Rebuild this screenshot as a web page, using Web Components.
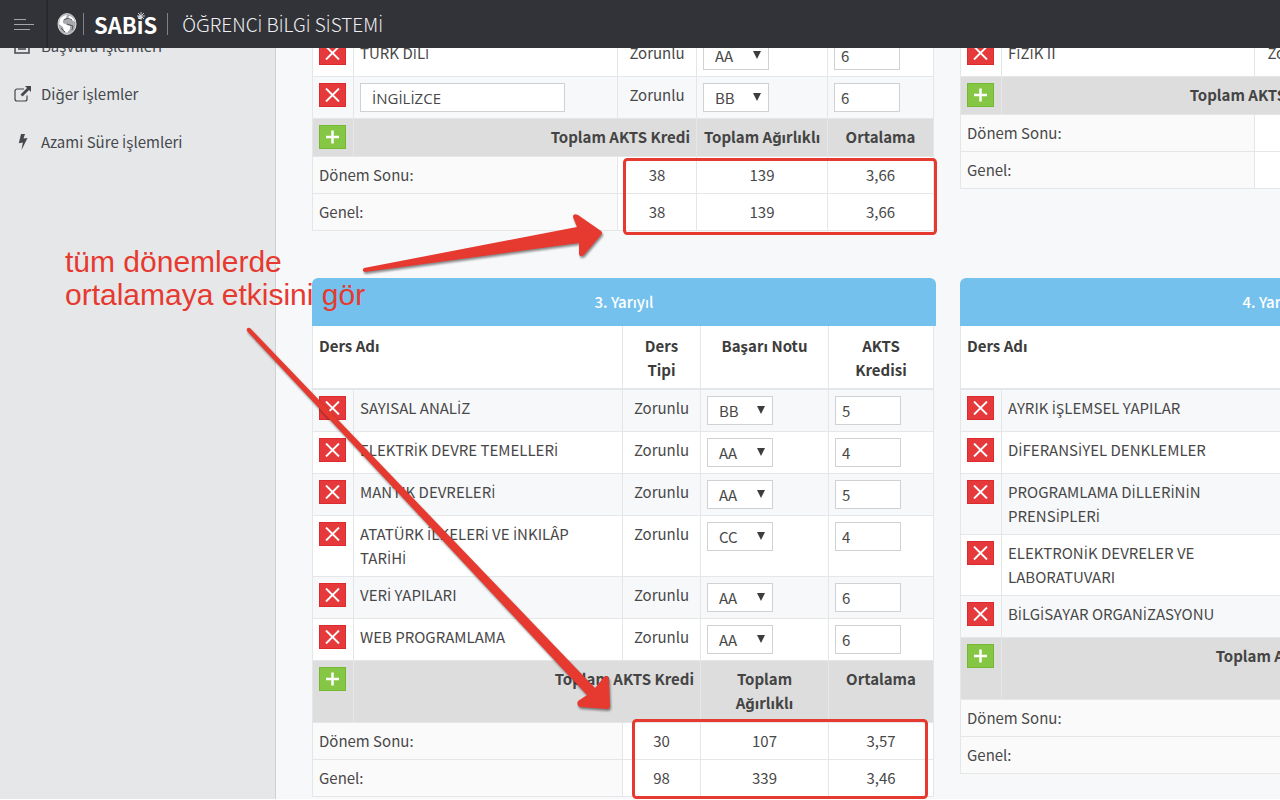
<!DOCTYPE html>
<html lang="tr">
<head>
<meta charset="utf-8">
<meta name="viewport" content="width=device-width, initial-scale=1">
<title>SABİS | Öğrenci Bilgi Sistemi</title>
<style>
  html, body { height: 100%; }
  body {
    margin: 0;
    overflow: hidden;
    background: #f7f8fa;
    color: #484848;
    font: 15px/24px "Noto Sans CJK SC", "Noto Sans", sans-serif;
  }
</style>
</head>
<body>
<app-shell>
  <app-header slot="header">ÖĞRENCİ BİLGİ SİSTEMİ</app-header>
  <side-nav slot="nav">
    <nav-item icon="form">Başvuru İşlemleri</nav-item>
    <nav-item icon="external">Diğer İşlemler</nav-item>
    <nav-item icon="bolt">Azami Süre İşlemleri</nav-item>
  </side-nav>
  <term-panel term="1"></term-panel>
  <term-panel term="2"></term-panel>
  <term-panel term="3"></term-panel>
  <term-panel term="4"></term-panel>
  <note-layer slot="notes">tüm dönemlerde<br>ortalamaya etkisini gör</note-layer>
</app-shell>

<script>
const define = (name, html, setup) => customElements.define(name, class extends HTMLElement {
  constructor() {
    super();
    this.attachShadow({ mode: 'open' }).innerHTML = html;
  }
  connectedCallback() { if (setup) setup(this, this.shadowRoot); }
});

const dotted = text => text.replace(/İ/g, '<span style="font-family:\'Open Sans\',sans-serif;line-height:0">İ</span>');

define('app-shell', `
<style>
  :host { display: grid; grid-template: 48px minmax(0, 1fr) / 276px minmax(0, 1fr); height: 100vh; position: relative; overflow: hidden; box-sizing: border-box; border-bottom: 1px solid #fff; }
  header { grid-column: 1 / -1; z-index: 1; }
  aside { background: #e6e7e9; border-right: 1px solid #cfd1d4; overflow: hidden; }
  main { overflow: hidden; }
  .terms { display: grid; grid-template-columns: repeat(2, minmax(624px, 1fr)); align-items: start; gap: 47px 24px; margin-top: -14px; padding: 0 36px; }
</style>
<header><slot name="header"></slot></header>
<aside><slot name="nav"></slot></aside>
<main><div class="terms"><slot></slot></div></main>
<slot name="notes"></slot>`);

define('app-header', `
<style>
  :host { display: flex; height: 48px; background: #323338; }
  button { width: 48px; padding: 0 0 0 14px; border: 0; border-right: 2px solid #28292d; background: none; display: flex; align-items: center; }
  .brand { display: flex; align-items: center; gap: 6px; padding-left: 9px; color: #fff; text-decoration: none; }
  i { width: 1px; height: 22px; background: #808185; }
  b { position: relative; margin: 0 4px; font: bold 22px/24px "Noto Sans CJK SC", "Noto Sans", sans-serif; }
  b svg { position: absolute; right: 12px; top: 0; }
  h1 { margin: 0 0 0 8px; font-weight: 300; font-size: 19px; line-height: 48px; white-space: nowrap; color: #f0f0f1; }
</style>
<button aria-label="Menü"><svg width="20" height="12" viewBox="0 0 20 12" stroke="#a4a5a8"><path d="M0 1.5h12M0 6.5h20M0 11.5h16"/></svg></button>
<a class="brand" href="#">
  <svg width="20" height="22" viewBox="0 0 20 22"><ellipse cx="10" cy="11" rx="9" ry="10.400" fill="#a9aaad" stroke="#dcdcdd"/><path d="M3 6c2-3 5-4 7-4l-1 3-3 2v3l4 2 3 1v3l-3 4-3-2-1-4-4-3zM12 3c3 0 5 3 6 6l-3-2-4-1z" fill="#fff"/><path d="M7 7c3-2 5-2 8 0M10 11l6 2-1 4M4 15l4 4" stroke="#55565b" fill="none"/></svg>
  <i></i>
  <b>SABiS<svg width="8" height="8" viewBox="0 0 8 8" stroke="#c9c9cb"><path d="M4 0v8M0 4h8M1 1l6 6M7 1L1 7"/></svg></b>
  <i></i>
  <h1></h1>
</a>`, (el, root) => {
  root.querySelector('h1').innerHTML = dotted(el.textContent);
});

define('side-nav', `
<style>
  :host { display: block; margin-top: -26px; }
</style>
<nav><slot></slot></nav>`);

const ICONS = {
  form: '<path d="M1 2h14v13H1zM4 8h8M4 11h8" fill="none" stroke="currentColor" stroke-width="1.5"/>',
  external: '<path d="M10 3H3a2 2 0 0 0-2 2V13a2 2 0 0 0 2 2h8a2 2 0 0 0 2-2v-3.500" fill="none" stroke="currentColor" stroke-width="1.200"/><path d="M11 0h6v6l-2-2-6.500 6.500-2-2L13 2z" fill="currentColor"/>',
  bolt: '<path d="M7 0h4L9.500 4.500l4-.6L7.500 16l1.300-7.500-4 .8z" fill="currentColor"/>'
};

define('nav-item', `
<style>
  :host { display: block; }
  a { display: flex; align-items: center; gap: 10px; height: 48px; padding-left: 14px; color: #45474b; text-decoration: none; white-space: nowrap; }
  svg { width: 17px; height: 17px; }
</style>
<a href="#"><svg viewBox="0 0 17 17"></svg><span></span></a>`, (el, root) => {
  root.querySelector('svg').innerHTML = ICONS[el.getAttribute('icon')];
  root.querySelector('span').innerHTML = dotted(el.textContent);
});

define('row-button', `
<style>
  :host { display: block; }
  button { display: grid; place-items: center; width: 27px; height: 24px; padding: 0; border: 1px solid #db2b2f; background: #e6393c; color: #fff; }
  :host([kind=add]) button { border-color: #74b832; background: #85c744; }
  path { fill: none; stroke: currentColor; stroke-width: 1.900; }
  :host([kind=add]) path { stroke-width: 2.500; }
</style>
<button><svg width="15" height="14" viewBox="0 0 15 14"><path/></svg></button>`, (el, root) => {
  const add = el.getAttribute('kind') === 'add';
  root.querySelector('button').setAttribute('aria-label', add ? 'Ders ekle' : 'Dersi sil');
  root.querySelector('path').setAttribute('d', add ? 'M7.500 .5v13M1 7h13' : 'M1 .5l13 13M14 .5l-13 13');
});

define('grade-select', `
<style>
  :host { display: block; position: relative; width: 66px; height: 29px; }
  select { appearance: none; width: 100%; height: 100%; box-sizing: border-box; margin: 0; padding: 0 24px 0 11px; border: 1px solid #d0d1d5; border-radius: 0; background: #fff; color: inherit; font: inherit; }
  svg { position: absolute; right: 8px; top: 10px; pointer-events: none; }
</style>
<select aria-label="Başarı notu"><option>AA</option><option>BA</option><option>BB</option><option>CB</option><option>CC</option></select>
<svg width="8" height="8" viewBox="0 0 8 8"><path d="M0 0h8L4 8z" fill="#3d3d3d"/></svg>`, (el, root) => {
  root.querySelector('select').value = el.getAttribute('value');
});

const TERMS = {
  1: { widths: [41, 264, 79, 131], rows: [['TÜRK DİLİ', 'AA', 6], ['İNGİLİZCE', 'BB', 6, true]], term: [38, 139, '3,66'], all: [38, 139, '3,66'] },
  2: { widths: [41, 253, 81, 131], rows: [['FİZİK II', 'AA', 6]], term: [30, 110, '3,66'], all: [68, 249, '3,66'] },
  3: { title: '3. Yarıyıl', wrap: true, widths: [41, 269, 78, 128],
    rows: [['SAYISAL ANALİZ', 'BB', 5], ['ELEKTRİK DEVRE TEMELLERİ', 'AA', 4], ['MANTIK DEVRELERİ', 'AA', 5], ['ATATÜRK İLKELERİ VE İNKILÂP TARİHİ', 'CC', 4], ['VERİ YAPILARI', 'AA', 6], ['WEB PROGRAMLAMA', 'AA', 6]],
    term: [30, 107, '3,57'], all: [98, 339, '3,46'] },
  4: { title: '4. Yarıyıl', wrap: true, widths: [41, 282, 78, 128],
    rows: [['AYRIK İŞLEMSEL YAPILAR', 'AA', 5], ['DİFERANSİYEL DENKLEMLER', 'AA', 5], ['PROGRAMLAMA DİLLERİNİN<br>PRENSİPLERİ', 'AA', 5], ['ELEKTRONİK DEVRELER VE<br>LABORATUVARI', 'AA', 5], ['BİLGİSAYAR ORGANİZASYONU', 'AA', 5]],
    term: [30, 107, '3,57'], all: [128, 446, '3,48'] }
};

define('term-panel', `
<style>
  :host { display: block; min-width: 0; }
  h2 { margin: 0; border-radius: 6px 6px 0 0; background: #75c1ed; color: #fff; font-size: 15px; font-weight: 500; line-height: 48px; text-align: center; }
  table { width: calc(100% - 2px); table-layout: fixed; border-collapse: collapse; background: #fff; }
  td, th { box-sizing: border-box; padding: 6px; border: 1px solid #e4e6e8; vertical-align: top; text-align: center; font-weight: 400; }
  thead th { padding-top: 8px; border-bottom-width: 2px; border-top: 0; font-weight: 700; color: #3c3c3c; }
  .name { text-align: left; }
  tr.odd { background: #f7f8fa; }
  .sum { background: #ddd; }
  .sum td { padding-bottom: 7px; font-weight: 700; color: #444; }
  .sum .right { text-align: right; }
  .total th { text-align: left; background: #fafafa; }
  input { display: block; width: 66px; height: 29px; box-sizing: border-box; padding: 0 6px; border: 1px solid #d0d1d5; background: #fff; color: inherit; font: inherit; }
  .name input { width: 205px; padding: 0 11px; font-family: "Open Sans", sans-serif; }
</style>
<div></div>`, (el, root) => {
  const t = TERMS[el.getAttribute('term')];
  const striped = t.title ? 0 : 1;
  const total = (label, v) => `<tr class="total"><th colspan="2" scope="row">${label}</th>${v.map(x => `<td>${x}</td>`).join('')}</tr>`;
  root.querySelector('div').innerHTML = `
    ${t.title ? `<h2>${t.title}</h2>` : ''}
    <table>
      <colgroup>${t.widths.map((w, i) => i === 1 ? '<col>' : `<col style="width:${w}px">`).join('')}<col style="width:${621 - t.widths.reduce((a, b) => a + b)}px"></colgroup>
      ${t.title ? '<thead><tr><th class="name" colspan="2">Ders Adı</th><th>Ders<br>Tipi</th><th>Başarı Notu</th><th>AKTS<br>Kredisi</th></tr></thead>' : ''}
      <tbody>${t.rows.map(([name, grade, credit, edit], i) => `
        <tr class="${i % 2 === striped ? 'odd' : ''}">
          <td><row-button></row-button></td>
          <td class="name">${edit ? `<input aria-label="Ders adı" value="${name}">` : dotted(name)}</td>
          <td>Zorunlu</td>
          <td><grade-select value="${grade}"></grade-select></td>
          <td><input aria-label="AKTS kredisi" value="${credit}"></td>
        </tr>`).join('')}
        <tr class="sum"><td><row-button kind="add"></row-button></td><td class="right" colspan="2">Toplam AKTS Kredi</td><td>Toplam${t.wrap ? '<br>' : ' '}Ağırlıklı</td><td>Ortalama</td></tr>
        ${total('Dönem Sonu:', t.term)}${total('Genel:', t.all)}
      </tbody>
    </table>`;
});

define('note-layer', `
<style>
  :host { position: absolute; inset: 0; z-index: 2; pointer-events: none; color: #e6392f; }
  p { position: absolute; left: 65px; top: 245px; margin: 0; font: 30px/33px "Liberation Sans", Arial, sans-serif; white-space: nowrap; }
  svg { position: absolute; left: 0; top: 0; }
  g { filter: drop-shadow(1px 2px 1px rgba(0,0,0,.45)); }
</style>
<svg width="1280" height="800" viewBox="0 0 1280 800" fill="#e6392f">
  <g>
    <path d="M364 268 L577 227 L573 217 Q573 213 578 215 L601 231 Q603 233 601 235 L584 255 Q579 258 579 253 L579 243 L365 272 Q361 271 364 268z"/>
    <path d="M250 328 L595 688 L604 677 Q608 674 609 679 L610 706 Q610 709 607 709 L580 707 Q576 705 578 701 L587 695 L247 331 Q246 327 250 328z"/>
  </g>
  <rect x="624.500" y="159.500" width="311" height="74" rx="3" fill="none" stroke="#e6392f" stroke-width="3"/>
  <rect x="633.500" y="720.500" width="293" height="77" rx="3" fill="none" stroke="#e6392f" stroke-width="3"/>
</svg>
<p><slot></slot></p>`);
</script>
</body>
</html>
